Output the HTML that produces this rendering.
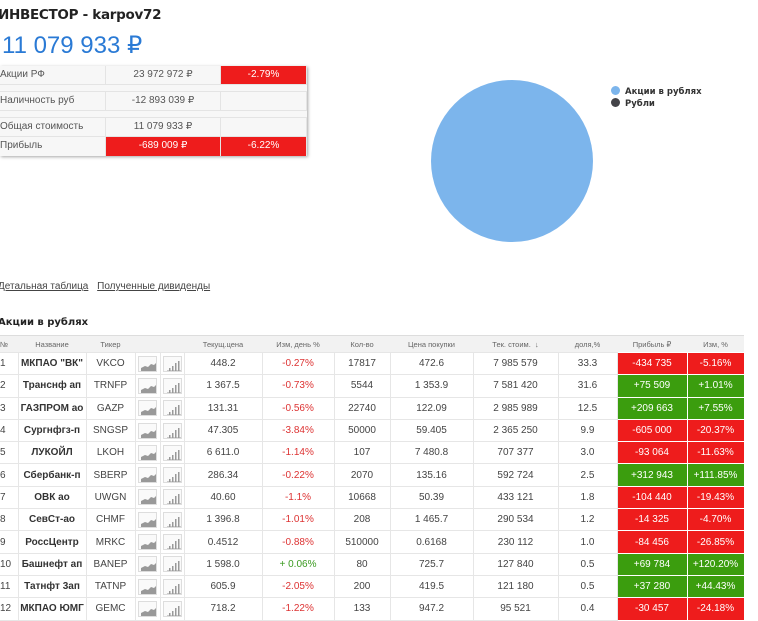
<!DOCTYPE html>
<html><head><meta charset="utf-8"><style>
*{margin:0;padding:0;box-sizing:border-box}
body{width:758px;height:614px;overflow:hidden;background:#fff;font-family:"Liberation Sans","DejaVu Sans",sans-serif;color:#333;position:relative}
.abs{position:absolute}
h1{position:absolute;left:-2px;top:7px;font-size:13.5px;font-weight:bold;color:#222;font-family:"DejaVu Sans",sans-serif;letter-spacing:-0.3px}
.big{position:absolute;left:2px;top:31px;font-size:24px;color:#2a7ad5;font-family:"Liberation Sans",sans-serif}
.sum{position:absolute;left:0;top:66px;width:307px;box-shadow:1px 1px 3px rgba(0,0,0,.35);background:#f7f7f7;font-size:10px;color:#555}
.sr{display:flex;height:19px;border-bottom:1px solid #e4e4e4}
.sr div{line-height:18px;border-right:1px solid #e4e4e4}
.c1{width:106px}.c2{width:115px;text-align:center}.c3{width:86px;text-align:center}
.gap{height:7px;border-bottom:1px solid #e4e4e4}
.red{background:#ee1c1c;color:#fff}
.grn{background:#3b9d0e;color:#fff}
.links{position:absolute;top:281px;left:-2px;font-size:10px;color:#444}
.links span{text-decoration:underline;margin-right:6px}
.sec{position:absolute;top:317px;left:-2px;font-size:10px;font-weight:bold;color:#222;font-family:"DejaVu Sans",sans-serif}
table{position:absolute;left:0;top:335px;width:744px;border-collapse:collapse;font-size:10px;table-layout:fixed}
th{height:17px;background:#f2f2f2;color:#666;font-weight:normal;font-size:7.5px;border-top:1px solid #ddd;text-align:center;white-space:nowrap}
td{height:22.3px;text-align:center;border:1px solid #e6e6e6;color:#444;padding:0;white-space:nowrap;overflow:hidden}
td.n{text-align:left;border-left:none}
td.nm{font-weight:bold;color:#333}
.rd{color:#d33}.gn{color:#3a9a20}
td.red,td.grn{border:1px solid #fff;color:#fff}
</style></head><body>
<h1>ИНВЕСТОР - karpov72</h1>
<div class="big">11 079 933 ₽</div>
<div class="sum">
<div class="sr"><div class="c1">Акции РФ</div><div class="c2">23 972 972 ₽</div><div class="c3 red">-2.79%</div></div>
<div class="gap"></div>
<div class="sr"><div class="c1">Наличность руб</div><div class="c2">-12 893 039 ₽</div><div class="c3"></div></div>
<div class="gap"></div>
<div class="sr"><div class="c1">Общая стоимость</div><div class="c2">11 079 933 ₽</div><div class="c3"></div></div>
<div class="sr" style="border:none"><div class="c1">Прибыль</div><div class="c2 red">-689 009 ₽</div><div class="c3 red">-6.22%</div></div>
</div>
<svg class="abs" style="left:420px;top:70px" width="190" height="185"><circle cx="92" cy="91" r="81" fill="#7cb5ec"/></svg>
<div class="abs" style="left:611px;top:86px;font-size:8.5px;font-weight:bold;color:#333;font-family:'DejaVu Sans',sans-serif;line-height:11px">
<div><span style="display:inline-block;width:9px;height:9px;border-radius:50%;background:#7cb5ec;vertical-align:-1px;margin-right:5px"></span>Акции в рублях</div>
<div><span style="display:inline-block;width:9px;height:9px;border-radius:50%;background:#434348;vertical-align:-1px;margin-right:5px"></span>Рубли</div>
</div>
<div class="links"><span>Детальная таблица</span> <span>Полученные дивиденды</span></div>
<div class="sec">Акции в рублях</div>
<table>
<colgroup><col style="width:18px"><col style="width:68px"><col style="width:49px"><col style="width:25px"><col style="width:24px"><col style="width:78px"><col style="width:72px"><col style="width:56px"><col style="width:83px"><col style="width:85px"><col style="width:59px"><col style="width:70px"><col style="width:57px"></colgroup>
<tr><th style="text-align:left">№</th><th>Название</th><th>Тикер</th><th></th><th></th><th>Текущ.цена</th><th>Изм, день %</th><th>Кол-во</th><th>Цена покупки</th><th>Тек. стоим. &nbsp;↓</th><th>доля,%</th><th>Прибыль ₽</th><th>Изм, %</th></tr>
<tbody id="tb"></tbody>
</table>
<script>
var d=[["1",'МКПАО "ВК"',"VKCO","448.2","-0.27%","17817","472.6","7 985 579","33.3","-434 735","-5.16%"],
["2","Транснф ап","TRNFP","1 367.5","-0.73%","5544","1 353.9","7 581 420","31.6","+75 509","+1.01%"],
["3","ГАЗПРОМ ао","GAZP","131.31","-0.56%","22740","122.09","2 985 989","12.5","+209 663","+7.55%"],
["4","Сургнфгз-п","SNGSP","47.305","-3.84%","50000","59.405","2 365 250","9.9","-605 000","-20.37%"],
["5","ЛУКОЙЛ","LKOH","6 611.0","-1.14%","107","7 480.8","707 377","3.0","-93 064","-11.63%"],
["6","Сбербанк-п","SBERP","286.34","-0.22%","2070","135.16","592 724","2.5","+312 943","+111.85%"],
["7","ОВК ао","UWGN","40.60","-1.1%","10668","50.39","433 121","1.8","-104 440","-19.43%"],
["8","СевСт-ао","CHMF","1 396.8","-1.01%","208","1 465.7","290 534","1.2","-14 325","-4.70%"],
["9","РоссЦентр","MRKC","0.4512","-0.88%","510000","0.6168","230 112","1.0","-84 456","-26.85%"],
["10","Башнефт ап","BANEP","1 598.0","+ 0.06%","80","725.7","127 840","0.5","+69 784","+120.20%"],
["11","Татнфт 3ап","TATNP","605.9","-2.05%","200","419.5","121 180","0.5","+37 280","+44.43%"],
["12","МКПАО ЮМГ","GEMC","718.2","-1.22%","133","947.2","95 521","0.4","-30 457","-24.18%"]];
var a='<svg width="19" height="16" style="vertical-align:middle;border:1px solid #ddd;background:#fafafa"><path d="M2 14 L2 11 L6 9 L9 10 L12 7 L15 8 L17 6 L17 14Z" fill="#999"/></svg>';
var b='<svg width="19" height="16" style="vertical-align:middle;border:1px solid #ddd;background:#fafafa"><path d="M3 14H17" stroke="#999"/><rect x="5" y="11" width="1.5" height="3" fill="#999"/><rect x="8" y="9" width="1.5" height="5" fill="#999"/><rect x="11" y="6" width="1.5" height="8" fill="#999"/><rect x="14" y="4" width="1.5" height="10" fill="#999"/></svg>';
var h="";d.forEach(function(r){var c=r[9][0]=="+"?"grn":"red";
h+='<tr><td class="n">'+r[0]+'</td><td class="nm">'+r[1]+'</td><td>'+r[2]+'</td><td>'+a+'</td><td>'+b+'</td><td>'+r[3]+'</td><td class="'+(r[4][0]=="+"?"gn":"rd")+'">'+r[4]+'</td><td>'+r[5]+'</td><td>'+r[6]+'</td><td>'+r[7]+'</td><td>'+r[8]+'</td><td class="'+c+'">'+r[9]+'</td><td class="'+c+'">'+r[10]+'</td></tr>';});
document.getElementById("tb").innerHTML=h;
</script>
</body></html>
